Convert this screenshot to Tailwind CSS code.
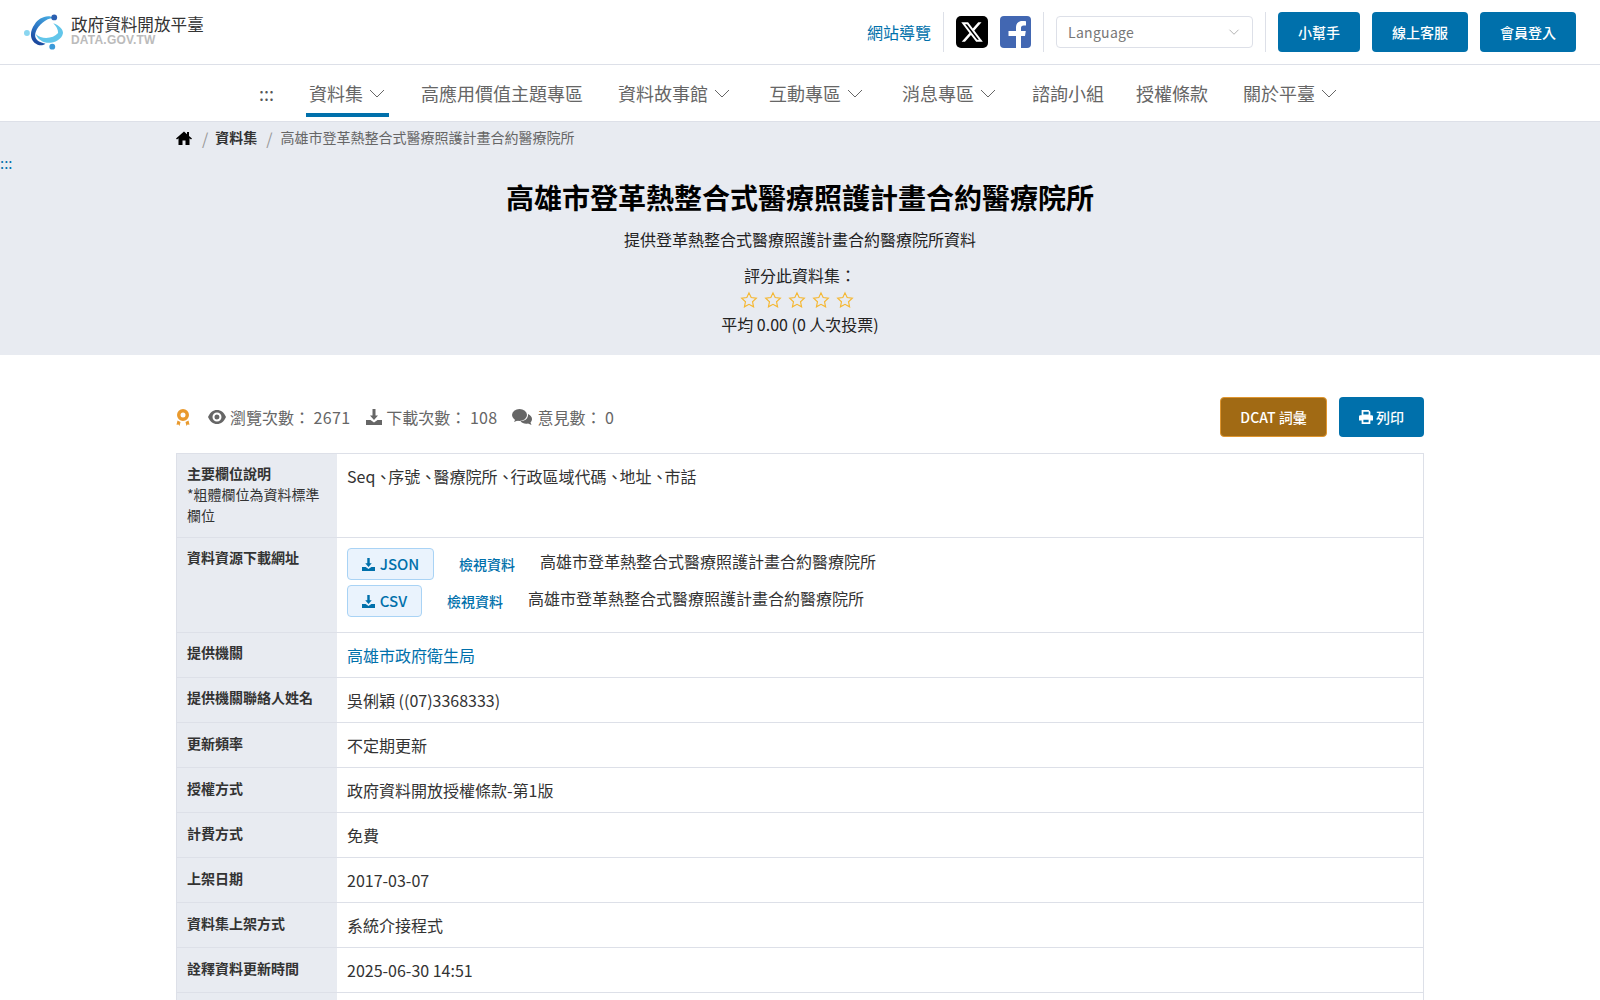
<!DOCTYPE html>
<html lang="zh-Hant">
<head>
    <meta charset="UTF-8">
    <title>高雄市登革熱整合式醫療照護計畫合約醫療院所</title>
    <script src="https://cdn.jsdelivr.net/npm/@tailwindcss/browser@4"></script>
</head>
<body class="font-['Noto_Sans_CJK_TC','Noto_Sans',sans-serif] text-[#333] bg-white h-[1000px] overflow-hidden">

    <!-- top bar -->
    <header class="h-[65px] border-b border-[#dde0e8] flex items-center justify-between pl-6 pr-6">
        <a class="flex items-center gap-2" href="#">
            <svg class="w-[39px] h-[36px]" viewBox="0 0 40 36">
                <defs>
                    <linearGradient id="crescent" x1="0.7" y1="0" x2="0.2" y2="1">
                        <stop offset="0" stop-color="#45a8e0"/>
                        <stop offset="0.55" stop-color="#2a6fc0"/>
                        <stop offset="1" stop-color="#173f96"/>
                    </linearGradient>
                </defs>
                <path d="M12 20c6 6 18 5 23-1 0-4-2-7-5-10 6 2 10 6 10 10-1 7-10 11-17 10-5-1-9-4-11-9z" fill="#62c6ea"/>
                <path d="M14 31C6 28 5 18 11 10 15 4 24-1 31 4 24 3 15 10 12 18c-2 6 1 10 10 12-3 2-5 2-8 1z" fill="url(#crescent)"/>
                <circle cx="31" cy="3" r="3" fill="#2b5fb0"/>
                <circle cx="3" cy="19" r="3" fill="#8ad6f0"/>
                <circle cx="29" cy="33" r="3" fill="#3b9ad9"/>
            </svg>
            <div class="-mt-[3px]">
                <div class="text-[16.6px] leading-[18px] mb-px text-[#333]">政府資料開放平臺</div>
                <div class="font-['Liberation_Sans',sans-serif] text-[12px] leading-[13px] font-bold text-[#bbb] tracking-[0.2px]">DATA.GOV.TW</div>
            </div>
        </a>
        <div class="flex items-center h-10">
            <a class="text-[#0070ab] text-base pr-3" href="#">網站導覽</a>
            <div class="w-px h-10 bg-[#dde0e8]"></div>
            <svg class="w-[32px] h-[32px] ml-3" viewBox="0 0 32 32">
                <rect width="32" height="32" rx="5" fill="#000"/>
                <g transform="translate(4 4)"><path fill="#fff" d="M18.244 2.250h3.308l-7.227 8.260 8.502 11.240H16.170l-5.214-6.817L4.990 21.750H1.680l7.730-8.835L1.254 2.250H8.080l4.713 6.231zm-1.161 17.520h1.833L7.084 4.126H5.117z"/></g>
            </svg>
            <svg class="w-[31px] h-[32px] ml-3" viewBox="0 0 31 32">
                <rect width="31" height="32" rx="4" fill="#4267b2"/>
                <path d="M21 32V20h4l.800-5H21v-3c0-1.500.700-2.500 2.700-2.500H26V5.200C25 5 23.500 5 22.300 5 18.500 5 16 7.300 16 11.500V15H8.500v5H16v12z" fill="#fff"/>
            </svg>
            <div class="w-px h-10 bg-[#dde0e8] ml-3"></div>
            <div class="w-[197px] h-8 ml-3 border border-[#dde0e8] rounded flex items-center justify-between pl-[11px] pr-3 text-[14px] tracking-[0.3px] text-[#777]">
                Language
                <svg class="w-3 h-3 text-[#aaa]" viewBox="0 0 16 16" fill="none" stroke="currentColor" stroke-width="1.200"><path d="M2 5l6 6 6-6"/></svg>
            </div>
            <div class="w-px h-10 bg-[#dde0e8] ml-3"></div>
            <a class="ml-3 w-[82px] h-10 rounded bg-[#0070ab] text-white text-[14px] font-medium flex items-center justify-center" href="#">小幫手</a>
            <a class="ml-3 w-[96px] h-10 rounded bg-[#0070ab] text-white text-[14px] font-medium flex items-center justify-center" href="#">線上客服</a>
            <a class="ml-3 w-[96px] h-10 rounded bg-[#0070ab] text-white text-[14px] font-medium flex items-center justify-center" href="#">會員登入</a>
        </div>
    </header>

    <!-- main nav -->
    <nav class="h-[56px] flex items-start text-[18px] text-[#666] pl-[259px]">
        <span class="h-[52px] pt-[4px] w-[14px] mr-[33px] flex items-center text-[#555]">:::</span>
        <a class="h-[52px] pt-[8px] w-[83px] border-b-4 border-[#0070ab] flex items-center pl-[3px] mr-[32px]" href="#">資料集
            <svg class="w-4 h-4 ml-[6px]" viewBox="0 0 16 16" fill="none" stroke="currentColor"><path d="M1 5l7 7 7-7"/></svg></a>
        <a class="h-[52px] pt-[4px] flex items-center mr-[35px]" href="#">高應用價值主題專區</a>
        <a class="h-[52px] pt-[4px] flex items-center mr-[39px]" href="#">資料故事館
            <svg class="w-4 h-4 ml-[6px]" viewBox="0 0 16 16" fill="none" stroke="currentColor"><path d="M1 5l7 7 7-7"/></svg></a>
        <a class="h-[52px] pt-[4px] flex items-center mr-[39px]" href="#">互動專區
            <svg class="w-4 h-4 ml-[6px]" viewBox="0 0 16 16" fill="none" stroke="currentColor"><path d="M1 5l7 7 7-7"/></svg></a>
        <a class="h-[52px] pt-[4px] flex items-center mr-[36px]" href="#">消息專區
            <svg class="w-4 h-4 ml-[6px]" viewBox="0 0 16 16" fill="none" stroke="currentColor"><path d="M1 5l7 7 7-7"/></svg></a>
        <a class="h-[52px] pt-[4px] flex items-center mr-[32px]" href="#">諮詢小組</a>
        <a class="h-[52px] pt-[4px] flex items-center mr-[35px]" href="#">授權條款</a>
        <a class="h-[52px] pt-[4px] flex items-center" href="#">關於平臺
            <svg class="w-4 h-4 ml-[6px]" viewBox="0 0 16 16" fill="none" stroke="currentColor"><path d="M1 5l7 7 7-7"/></svg></a>
    </nav>

    <!-- hero -->
    <section class="h-[234px] bg-[#e8ebf1] border-t border-[#dde0e8] relative">
        <div class="w-[1248px] mx-auto h-[31px] flex items-center text-[14px] text-[#666]">
            <svg class="w-4 h-4 text-black" viewBox="0 0 16 16" fill="currentColor"><path d="M8 1.500L0 8.500l1 1.100L2.500 8.300V15h4v-4.500h3V15h4V8.300L15 9.600l1-1.100-3-2.600V2h-2v2.200z"/></svg>
            <span class="ml-[10px] mr-[7px] text-base text-[#999]">/</span>
            <span class="font-bold text-[#333]">資料集</span>
            <span class="ml-[9px] mr-[8px] text-base text-[#999]">/</span>
            <span>高雄市登革熱整合式醫療照護計畫合約醫療院所</span>
        </div>
        <span class="absolute left-0 top-[27px] text-[#0070ab] text-[15px] leading-[28px]">:::</span>
        <h1 class="text-[28px] leading-[40px] font-bold text-black text-center mt-[24px]">高雄市登革熱整合式醫療照護計畫合約醫療院所</h1>
        <p class="text-base leading-6 text-center text-[#222] mt-[10px]">提供登革熱整合式醫療照護計畫合約醫療院所資料</p>
        <p class="text-base leading-6 text-center text-[#222] mt-3">評分此資料集：</p>
        <div class="flex justify-center gap-[6px] h-6 items-center pr-[6px] mt-px">
            <svg class="w-[18px] h-[18px]" viewBox="0 0 24 24" fill="none" stroke="#f5b731" stroke-width="1.500"><path d="M12 2.500l2.900 6.300 6.900.8-5.100 4.700 1.400 6.800-6.100-3.400-6.100 3.400 1.400-6.800L2.200 9.600l6.900-.8z"/></svg>
            <svg class="w-[18px] h-[18px]" viewBox="0 0 24 24" fill="none" stroke="#f5b731" stroke-width="1.500"><path d="M12 2.500l2.900 6.300 6.900.8-5.100 4.700 1.400 6.800-6.100-3.400-6.100 3.400 1.400-6.800L2.200 9.600l6.900-.8z"/></svg>
            <svg class="w-[18px] h-[18px]" viewBox="0 0 24 24" fill="none" stroke="#f5b731" stroke-width="1.500"><path d="M12 2.500l2.900 6.300 6.900.8-5.100 4.700 1.400 6.800-6.100-3.400-6.100 3.400 1.400-6.800L2.200 9.600l6.900-.8z"/></svg>
            <svg class="w-[18px] h-[18px]" viewBox="0 0 24 24" fill="none" stroke="#f5b731" stroke-width="1.500"><path d="M12 2.500l2.900 6.300 6.900.8-5.100 4.700 1.400 6.800-6.100-3.400-6.100 3.400 1.400-6.800L2.200 9.600l6.900-.8z"/></svg>
            <svg class="w-[18px] h-[18px]" viewBox="0 0 24 24" fill="none" stroke="#f5b731" stroke-width="1.500"><path d="M12 2.500l2.900 6.300 6.900.8-5.100 4.700 1.400 6.800-6.100-3.400-6.100 3.400 1.400-6.800L2.200 9.600l6.900-.8z"/></svg>
        </div>
        <p class="text-base leading-6 text-center text-[#222]">平均 0.00 (0 人次投票)</p>
    </section>

    <main class="w-[1248px] mx-auto">
        <!-- stats + actions -->
        <div class="flex items-center justify-between mt-[42px] mb-4 h-10">
            <div class="flex items-center text-base text-[#666]">
                <svg class="w-[14px] h-[17px] text-[#e99a2e] mr-[18px]" viewBox="0 0 14 17" fill="currentColor"><path fill-rule="evenodd" d="M7 0a6 6 0 110 12A6 6 0 017 0zm0 3.500a2.500 2.500 0 100 5 2.500 2.500 0 000-5z"/><path d="M1.500 11.500l3 1.500-1 4-1-1.500-2 .2zM12.500 11.500l-3 1.500 1 4 1-1.500 2 .2z"/></svg>
                <svg class="w-[18px] h-[14px] mr-[4px]" viewBox="0 0 18 14" fill="currentColor"><path fill-rule="evenodd" d="M9 0C5 0 2 2.500 0 7c2 4.500 5 7 9 7s7-2.500 9-7c-2-4.500-5-7-9-7zm0 2.500a4.500 4.500 0 110 9 4.500 4.500 0 010-9zm0 2a2.500 2.500 0 100 5 2.500 2.500 0 000-5z"/></svg>
                <span>瀏覽次數： <span class="tracking-[0.3px]">2671</span></span>
                <svg class="w-4 h-4 ml-[16px] mr-[4px]" viewBox="0 0 16 16" fill="currentColor"><path d="M6.500 0h3v6.500H12L8 11 4 6.500h2.500zM0 11h4.500L8 13.500 11.500 11H16v5H0z"/></svg>
                <span>下載次數： <span class="tracking-[0.3px]">108</span></span>
                <svg class="w-5 h-4 ml-[15px] mr-[5px]" viewBox="0 0 20 16" fill="currentColor"><ellipse cx="7.500" cy="6" rx="7.500" ry="6"/><path d="M2 13l2-4 3 2z"/><path d="M16 5c2.500 1 4 3 4 5 0 1.500-.7 2.500-1.500 3.500l1 2.500-3.500-1.500c-3 .7-6-.3-7.500-2.500 4 .3 8-2 7.500-7z"/></svg>
                <span>意見數： 0</span>
            </div>
            <div class="flex gap-3">
                <a class="w-[107px] h-10 rounded bg-[#a16a14] border border-[#e0962f] text-white text-[14px] font-medium flex items-center justify-center" href="#">DCAT 詞彙</a>
                <a class="w-[85px] h-10 rounded bg-[#0070ab] text-white text-[14px] font-medium flex items-center justify-center gap-[3px]" href="#">
                    <svg class="w-[14px] h-[14px]" viewBox="0 0 16 16" fill="currentColor"><path fill-rule="evenodd" d="M3 0h8l2 2v4H3zM1.500 6h13A1.500 1.500 0 0116 7.500V12h-3v4H3v-4H0V7.500A1.500 1.500 0 011.500 6zM5 2v3h6V2zm0 9v3h6v-3z"/></svg>
                    列印</a>
            </div>
        </div>

        <!-- detail table -->
        <div class="border border-b-0 border-[#dde0e8]">
            <div class="flex border-b border-[#dde0e8]">
                <div class="w-[160px] shrink-0 bg-[#e8ebf1] pt-[9px] pb-[11px] px-[10px] text-[14px] leading-[21px]"><b class="font-bold">主要欄位說明</b><br>*粗體欄位為資料標準欄位</div>
                <div class="py-2.5 px-[10px] text-base leading-6">Seq<span class="-mr-[3px]">、</span>序號<span class="-mr-[3px]">、</span>醫療院所<span class="-mr-[3px]">、</span>行政區域代碼<span class="-mr-[3px]">、</span>地址<span class="-mr-[3px]">、</span>市話</div>
            </div>
            <div class="flex border-b border-[#dde0e8] h-[95px]">
                <div class="w-[160px] shrink-0 bg-[#e8ebf1] pt-[9px] pb-[11px] px-[10px] text-[14px] leading-[21px] font-bold">資料資源下載網址</div>
                <div class="py-2.5 px-[10px] text-base leading-6">
                    <div class="flex items-start h-[37px]">
                        <a class="w-[87px] h-8 rounded border border-[#a9d3f5] bg-[#eaf3fd] text-[#0070ab] font-medium text-[15px] flex items-center justify-center gap-[5px]" href="#">
                            <svg class="w-[13px] h-[13px]" viewBox="0 0 16 16" fill="currentColor"><path d="M6.500 0h3v6.500H12L8 11 4 6.500h2.500zM0 11h4.500L8 13.500 11.500 11H16v5H0z"/></svg>JSON</a>
                        <a class="ml-[25px] text-[#0070ab] text-[14px] font-medium h-8 flex items-center" href="#">檢視資料</a>
                        <span class="ml-[25px] leading-[26px]">高雄市登革熱整合式醫療照護計畫合約醫療院所</span>
                    </div>
                    <div class="flex items-start">
                        <a class="w-[75px] h-8 rounded border border-[#a9d3f5] bg-[#eaf3fd] text-[#0070ab] font-medium text-[15px] flex items-center justify-center gap-[5px]" href="#">
                            <svg class="w-[13px] h-[13px]" viewBox="0 0 16 16" fill="currentColor"><path d="M6.500 0h3v6.500H12L8 11 4 6.500h2.500zM0 11h4.500L8 13.500 11.500 11H16v5H0z"/></svg>CSV</a>
                        <a class="ml-[25px] text-[#0070ab] text-[14px] font-medium h-8 flex items-center" href="#">檢視資料</a>
                        <span class="ml-[25px] leading-[26px]">高雄市登革熱整合式醫療照護計畫合約醫療院所</span>
                    </div>
                </div>
            </div>
            <div class="flex border-b border-[#dde0e8]">
                <div class="w-[160px] shrink-0 bg-[#e8ebf1] pt-[9px] pb-[11px] px-[10px] text-[14px] leading-[21px] font-bold">提供機關</div>
                <a class="py-2.5 px-[10px] text-base leading-6 text-[#0070ab]" href="#">高雄市政府衛生局</a>
            </div>
            <div class="flex border-b border-[#dde0e8]">
                <div class="w-[160px] shrink-0 bg-[#e8ebf1] pt-[9px] pb-[11px] px-[10px] text-[14px] leading-[21px] font-bold">提供機關聯絡人姓名</div>
                <div class="py-2.5 px-[10px] text-base leading-6">吳俐穎 ((07)3368333)</div>
            </div>
            <div class="flex border-b border-[#dde0e8]">
                <div class="w-[160px] shrink-0 bg-[#e8ebf1] py-2.5 px-[10px] text-[14px] leading-[21px] font-bold">更新頻率</div>
                <div class="py-2.5 px-[10px] text-base leading-6">不定期更新</div>
            </div>
            <div class="flex border-b border-[#dde0e8]">
                <div class="w-[160px] shrink-0 bg-[#e8ebf1] py-2.5 px-[10px] text-[14px] leading-[21px] font-bold">授權方式</div>
                <div class="py-2.5 px-[10px] text-base leading-6">政府資料開放授權條款-第1版</div>
            </div>
            <div class="flex border-b border-[#dde0e8]">
                <div class="w-[160px] shrink-0 bg-[#e8ebf1] py-2.5 px-[10px] text-[14px] leading-[21px] font-bold">計費方式</div>
                <div class="py-2.5 px-[10px] text-base leading-6">免費</div>
            </div>
            <div class="flex border-b border-[#dde0e8]">
                <div class="w-[160px] shrink-0 bg-[#e8ebf1] py-2.5 px-[10px] text-[14px] leading-[21px] font-bold">上架日期</div>
                <div class="py-2.5 px-[10px] text-base leading-6">2017-03-07</div>
            </div>
            <div class="flex border-b border-[#dde0e8]">
                <div class="w-[160px] shrink-0 bg-[#e8ebf1] py-2.5 px-[10px] text-[14px] leading-[21px] font-bold">資料集上架方式</div>
                <div class="py-2.5 px-[10px] text-base leading-6">系統介接程式</div>
            </div>
            <div class="flex border-b border-[#dde0e8]">
                <div class="w-[160px] shrink-0 bg-[#e8ebf1] py-2.5 px-[10px] text-[14px] leading-[21px] font-bold">詮釋資料更新時間</div>
                <div class="py-2.5 px-[10px] text-base leading-6">2025-06-30 14:51</div>
            </div>
            <div class="flex border-b border-[#dde0e8]">
                <div class="w-[160px] shrink-0 bg-[#e8ebf1] h-[45px]"></div>
                <div class="py-2.5 px-[10px] text-base leading-6"></div>
            </div>
        </div>
    </main>
</body>
</html>
